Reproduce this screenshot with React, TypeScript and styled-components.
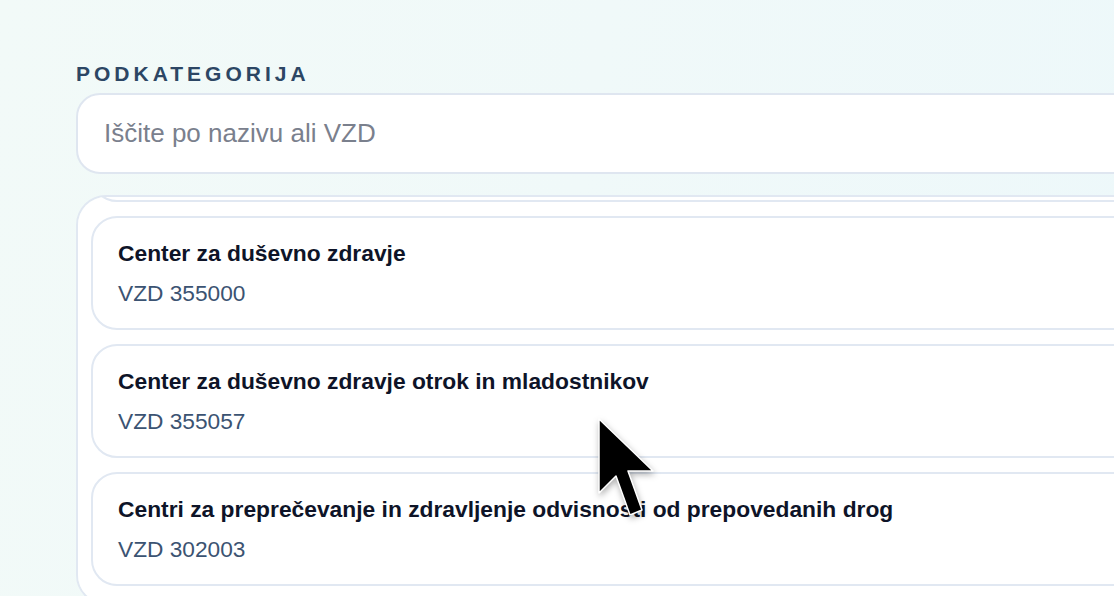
import React, { useLayoutEffect, useRef } from 'react';
import styled, { createGlobalStyle } from 'styled-components';

const GlobalStyle = createGlobalStyle`
  html, body {
    margin: 0;
    padding: 0;
    overflow: hidden;
  }
  body {
    font-family: 'Liberation Sans', Arial, Helvetica, sans-serif;
    background: #f0faf9;
  }
`;

const items = [
  { name: 'Bolnišnična psihiatrična obravnava', code: '354000' },
  { name: 'Center za duševno zdravje', code: '355000' },
  { name: 'Center za duševno zdravje otrok in mladostnikov', code: '355057' },
  { name: 'Centri za preprečevanje in zdravljenje odvisnosti od prepovedanih drog', code: '302003' },
  { name: 'Dispanzer za mentalno zdravje', code: '306009' },
];

export default function App() {
  const listRef = useRef<HTMLDivElement>(null);

  useLayoutEffect(() => {
    // list is shown scrolled a bit, the first card is almost out of view
    if (listRef.current) listRef.current.scrollTop = 123;
  }, []);

  return (
    <Page>
      <GlobalStyle />
      <Field>
        <Label>Podkategorija</Label>
        <Search placeholder="Iščite po nazivu ali VZD" />
        <List ref={listRef}>
          {items.map((item) => (
            <Card key={item.code}>
              <Title>{item.name}</Title>
              <Code>VZD {item.code}</Code>
            </Card>
          ))}
        </List>
      </Field>
      <Pointer />
    </Page>
  );
}

function Pointer() {
  return (
    <Cursor width="72" height="120" viewBox="0 0 72 120">
      <polygon
        points="6,6 6,80 23,63 37,102 49,97 35,58 60,58"
        fill="#000"
        stroke="#fff"
        strokeWidth="1.5"
        strokeLinejoin="round"
      />
    </Cursor>
  );
}

const Page = styled.div`
  position: relative;
  height: 100vh;
  background: linear-gradient(100deg, #f2faf8 0%, #f0f9f9 50%, #edf8fa 100%);
  padding: 61px 0 0 76px;
  box-sizing: border-box;
`;

const Field = styled.div`
  display: flex;
  flex-direction: column;
  width: 1100px;
`;

const Label = styled.div`
  font-size: 21px;
  line-height: 25px;
  font-weight: 700;
  letter-spacing: 4px;
  text-transform: uppercase;
  color: #2c4664;
  margin-bottom: 7px;
`;

const Search = styled.input`
  height: 81px;
  box-sizing: border-box;
  border: 2px solid #dfe6f0;
  border-radius: 24px;
  background: #fff;
  padding: 0 26px;
  font-family: 'Liberation Sans', Arial, sans-serif;
  font-size: 26px;
  color: #1b2438;
  outline: none;

  &::placeholder {
    color: #7a808d;
  }
`;

const List = styled.div`
  margin-top: 21px;
  height: 410px;
  box-sizing: border-box;
  border: 2px solid #e1e8f2;
  border-radius: 30px;
  background: #fff;
  padding: 14px 13px;
  display: flex;
  flex-direction: column;
  gap: 14px;
  overflow-y: auto;
  scrollbar-width: none;

  &::-webkit-scrollbar {
    display: none;
  }
`;

const Card = styled.div`
  flex: 0 0 auto;
  height: 114px;
  box-sizing: border-box;
  border: 2px solid #e1e8f2;
  border-radius: 26px;
  background: #fff;
  padding: 20px 25px;
  display: flex;
  flex-direction: column;
  gap: 10px;
`;

const Title = styled.div`
  font-size: 22.8px;
  line-height: 30px;
  font-weight: 700;
  color: #0e1428;
  white-space: nowrap;
`;

const Code = styled.div`
  font-size: 22.7px;
  line-height: 30px;
  color: #3b5372;
`;

const Cursor = styled.svg`
  position: absolute;
  left: 593px;
  top: 413px;
  filter: drop-shadow(1px 3px 3px rgba(0, 0, 0, 0.3));
`;
